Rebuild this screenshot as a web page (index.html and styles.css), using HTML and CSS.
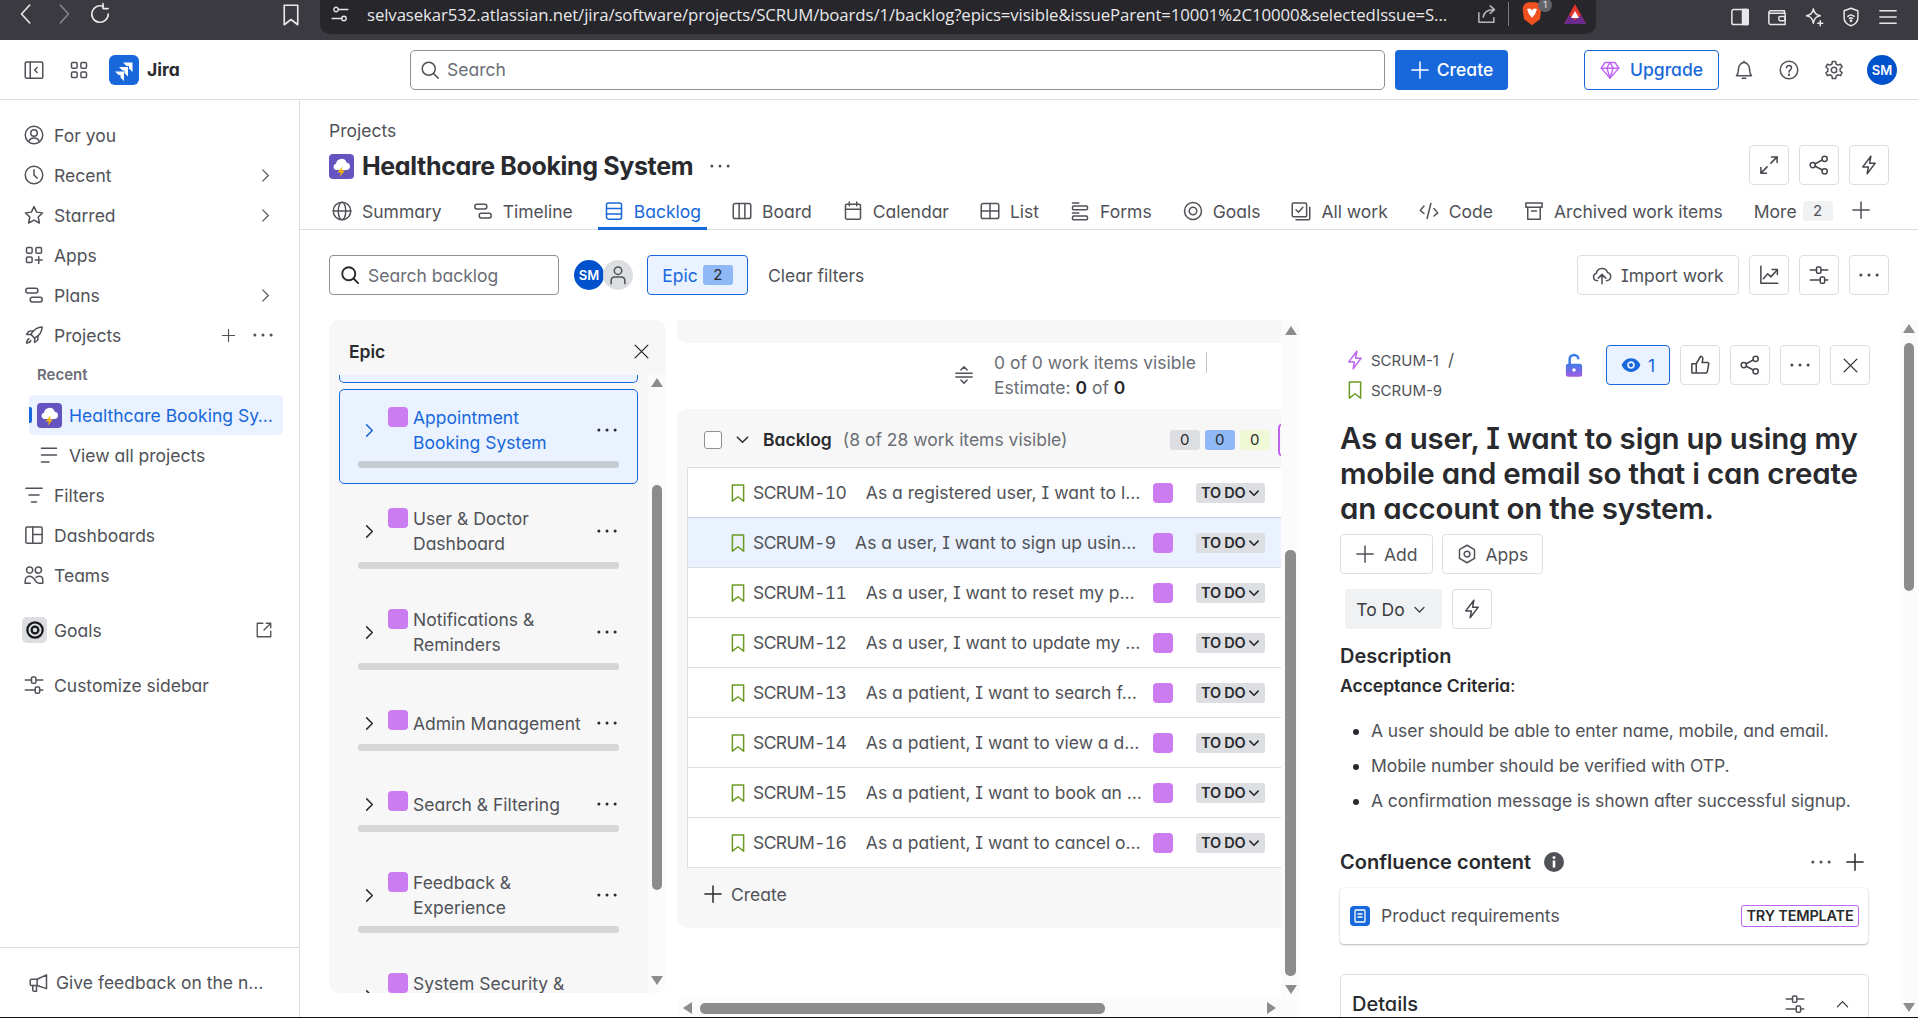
FILE: index.html
```html
<!DOCTYPE html>
<html lang="en">
<head>
  <meta charset="UTF-8">
  <title>Backlog - Healthcare Booking System - Jira</title>
  <link rel="stylesheet" href="styles.css">
</head>
<body>
  <!-- icon set -->
  <svg class="defs" xmlns="http://www.w3.org/2000/svg">
    <defs>
      <linearGradient id="lockGrad" x1="0" y1="0" x2="0" y2="1">
        <stop offset="0" stop-color="#3d7be8"/>
        <stop offset="1" stop-color="#a35ce0"/>
      </linearGradient>
    </defs>
    <symbol id="back" viewBox="0 0 16 16"><path d="M10.500 2 5 8l5.500 6"/></symbol>
    <symbol id="forward" viewBox="0 0 16 16"><path d="M5.500 2 11 8l-5.500 6"/></symbol>
    <symbol id="reload" viewBox="0 0 16 16"><path d="M13.500 8A5.500 5.500 0 1 1 10 2.900"/><path d="M10 1v3.400h3.400" /></symbol>
    <symbol id="bookmark" viewBox="0 0 16 16"><path d="M3.500 1.500h9v13L8 11l-4.500 3.500z"/></symbol>
    <symbol id="tune" viewBox="0 0 16 16"><circle cx="4.500" cy="4" r="2"/><path d="M6.500 4H15"/><circle cx="11.500" cy="12" r="2"/><path d="M1 12h8.500"/></symbol>
    <symbol id="sharepage" viewBox="0 0 16 16"><path d="M1.500 7v7.500h12V11"/><path d="M5 10.500c.5-4 3-6 8-6"/><path d="M10.500 1.500 14 4.500l-3.500 3"/></symbol>
    <symbol id="panel" viewBox="0 0 16 16"><rect x="1.500" y="2" width="13" height="12" rx="1.500"/><rect x="10" y="2" width="4.500" height="12" fill="currentColor"/></symbol>
    <symbol id="wallet" viewBox="0 0 16 16"><path d="M14 5V3H3a1.500 1.500 0 0 0-1.500 1.500v8A1.500 1.500 0 0 0 3 14h11.500V5H2"/><rect x="9.500" y="7.500" width="5" height="3.500" rx="1"/></symbol>
    <symbol id="sparkle" viewBox="0 0 16 16"><path d="M7.500 1.500c.6 3.600 2 5 5.500 5.500-3.500.6-4.900 2-5.500 6C6.900 9 5.500 7.600 2 7c3.500-.5 4.900-1.900 5.500-5.500z"/><path d="M13 11v4M11 13h4"/></symbol>
    <symbol id="shield" viewBox="0 0 16 16"><path d="M8 1 2.500 3v5.500C2.500 12 5 14 8 15c3-1 5.500-3 5.500-6.500V3z"/><path d="M5.500 7.500c1.500-1.300 3.500-1.300 5 0M6.700 9.200c.8-.6 1.800-.6 2.600 0"/><circle cx="8" cy="11" r=".5"/></symbol>
    <symbol id="menu" viewBox="0 0 16 16"><path d="M1.500 3h13M1.500 8h13M1.500 13h13"/></symbol>
    <symbol id="collapse" viewBox="0 0 16 16"><rect x="1" y="1.500" width="14" height="13" rx="1"/><path d="M5 1.500v13M10.500 6 8.500 8l2 2"/></symbol>
    <symbol id="grid" viewBox="0 0 16 16"><rect x="2" y="2" width="4.500" height="4.500" rx="1"/><rect x="9.500" y="2" width="4.500" height="4.500" rx="1"/><rect x="2" y="9.500" width="4.500" height="4.500" rx="1"/><rect x="9.500" y="9.500" width="4.500" height="4.500" rx="1"/></symbol>
    <symbol id="search" viewBox="0 0 16 16"><circle cx="7" cy="7" r="5.200"/><path d="m11 11 3.500 3.500"/></symbol>
    <symbol id="plus" viewBox="0 0 16 16"><path d="M8 1.500v13M1.500 8h13"/></symbol>
    <symbol id="bell" viewBox="0 0 16 16"><path d="M2 12.500c1.200-1 1.500-2 1.500-4.500C3.500 4.500 5.500 2 8 2s4.500 2.500 4.500 6c0 2.500.3 3.500 1.500 4.500z"/><path d="M6.500 14.500h3M8 1v1"/></symbol>
    <symbol id="help" viewBox="0 0 16 16"><circle cx="8" cy="8" r="7"/><path d="M6 6.200C6 5 6.900 4.300 8 4.300s2 .8 2 1.900c0 1.700-2 1.600-2 3.300"/><circle cx="8" cy="11.700" r=".4"/></symbol>
    <symbol id="gear" viewBox="0 0 16 16"><path d="M6.700 1.200h2.600l.4 2 1.500.9 2-.7 1.300 2.200-1.600 1.400v1.900l1.600 1.300-1.300 2.300-2-.7-1.500.9-.4 2.100H6.700l-.4-2.100-1.500-.9-2 .7-1.300-2.300 1.600-1.300V7l-1.600-1.400 1.300-2.200 2 .7 1.500-.9z"/><circle cx="8" cy="8" r="2.200"/></symbol>
    <symbol id="foryou" viewBox="0 0 16 16"><circle cx="8" cy="8" r="7"/><circle cx="8" cy="6.300" r="2.600"/><path d="M3.800 13.200c.6-2 2.200-2.900 4.200-2.900s3.600.9 4.200 2.900"/></symbol>
    <symbol id="clock" viewBox="0 0 16 16"><circle cx="8" cy="8" r="7"/><path d="M8 3.800V8l2.600 2.600"/></symbol>
    <symbol id="star" viewBox="0 0 16 16"><path d="m8 1.300 2.100 4.400 4.700.6-3.400 3.300.9 4.800L8 12.100l-4.300 2.300.9-4.800-3.400-3.300 4.700-.6z"/></symbol>
    <symbol id="apps" viewBox="0 0 16 16"><rect x="2" y="2" width="4.500" height="4.500" rx="1"/><rect x="9.500" y="2" width="4.500" height="4.500" rx="1"/><rect x="2" y="9.500" width="4.500" height="4.500" rx="1"/><path d="M11.800 9.300v5.400M9 12h5.500"/></symbol>
    <symbol id="plans" viewBox="0 0 16 16"><rect x="1.500" y="2.500" width="9.500" height="3.800" rx="1.500"/><rect x="5" y="9.700" width="9.500" height="3.800" rx="1.500"/></symbol>
    <symbol id="rocket" viewBox="0 0 16 16"><path d="M14.500 1.500c-4 0-6.500 1.700-9 6l3 3c4.300-2.500 6-5 6-9z"/><path d="M5.500 7.500H2L4 5l3-.3M8.500 10.500V14l2.500-2 .3-3"/><path d="M4 11c-1.200.5-1.800 1.600-2 3.500 1.900-.2 3-.8 3.500-2"/></symbol>
    <symbol id="dots" viewBox="0 0 16 16"><circle cx="1.500" cy="8" r="1.200" class="solid"/><circle cx="8" cy="8" r="1.200" class="solid"/><circle cx="14.500" cy="8" r="1.200" class="solid"/></symbol>
    <symbol id="right" viewBox="0 0 16 16"><path d="m5 2 6 6-6 6"/></symbol>
    <symbol id="down" viewBox="0 0 16 16"><path d="M2.500 5.500 8 11l5.500-5.500"/></symbol>
    <symbol id="up" viewBox="0 0 16 16"><path d="M2.500 10.500 8 5l5.500 5.500"/></symbol>
    <symbol id="close" viewBox="0 0 16 16"><path d="m2 2 12 12M14 2 2 14"/></symbol>
    <symbol id="lines" viewBox="0 0 16 16"><path d="M2 2.500h12M2 8h12M2 13.500h6"/></symbol>
    <symbol id="filter" viewBox="0 0 16 16"><path d="M1.500 2.500h13M4 8h8M6 13.500h4"/></symbol>
    <symbol id="dash" viewBox="0 0 16 16"><rect x="1.500" y="1.500" width="13" height="13" rx="1"/><path d="M7 1.500v13M7 7.500h7.500"/></symbol>
    <symbol id="teams" viewBox="0 0 16 16"><circle cx="4.500" cy="4" r="2.500"/><circle cx="11.500" cy="4" r="2.500"/><path d="M1 14.500v-2c0-2 1.500-3.500 3.500-3.500 2.500 0 3.500 2 4.500 3.500.5 1 1.200 2 3 2h3v-3c0-1.500-1.200-2.500-3-2.500-1 0-1.800.5-2.500 1"/><path d="M1 14.500h4"/></symbol>
    <symbol id="target" viewBox="0 0 16 16"><circle cx="8" cy="8" r="6.800"/><circle cx="8" cy="8" r="3"/></symbol>
    <symbol id="external" viewBox="0 0 16 16"><path d="M7 2H2v12h12V9"/><path d="M8 8l6-6M10 2h4v4"/></symbol>
    <symbol id="sliders" viewBox="0 0 16 16"><path d="M1 4h5M10 4h5M1 12h8M13 12h2"/><rect x="6" y="1.500" width="3.500" height="5" rx="1"/><rect x="9" y="9.500" width="3.500" height="5" rx="1"/></symbol>
    <symbol id="megaphone" viewBox="0 0 16 16"><path d="M14 1.500v11L6.500 10H2a1 1 0 0 1-1-1V6a1 1 0 0 1 1-1h4.500z"/><path d="M6.500 5v5M3 10v3.500c0 .6.400 1 1 1h2V10"/></symbol>
    <symbol id="globe" viewBox="0 0 16 16"><circle cx="8" cy="8" r="7"/><ellipse cx="8" cy="8" rx="3" ry="7"/><path d="M1 8h14"/></symbol>
    <symbol id="backlog" viewBox="0 0 16 16"><rect x="2" y="1.500" width="12" height="13" rx="1.500"/><path d="M2 6h12M2 10.300h12"/></symbol>
    <symbol id="board" viewBox="0 0 16 16"><rect x="1" y="2" width="14" height="12" rx="1.500"/><path d="M5.700 2v12M10.300 2v12"/></symbol>
    <symbol id="calendar" viewBox="0 0 16 16"><rect x="2" y="2.500" width="12" height="12" rx="1"/><path d="M2 6.500h12M5 .8v3M11 .8v3"/></symbol>
    <symbol id="table" viewBox="0 0 16 16"><rect x="1" y="2" width="14" height="12" rx="1.500"/><path d="M8 2v12M1 8h14"/></symbol>
    <symbol id="forms" viewBox="0 0 16 16"><path d="M2 1.500h5"/><rect x="2" y="4" width="12" height="3" rx="1"/><path d="M2 9.500h5"/><rect x="2" y="12" width="12" height="3" rx="1"/></symbol>
    <symbol id="allwork" viewBox="0 0 16 16"><rect x="1" y="1.500" width="11.500" height="11" rx="1"/><path d="m4 7 2 2 3.500-4"/><path d="M15 5v9a1 1 0 0 1-1 1H4"/></symbol>
    <symbol id="code" viewBox="0 0 16 16"><path d="M4 4 1 7.500 4 10M12 6l3 3.500-3 2.500M9.500 2 6.500 14"/></symbol>
    <symbol id="archive" viewBox="0 0 16 16"><rect x="1.500" y="1.500" width="13" height="3.500"/><path d="M3 5v9.500h10V5M6 8h4"/></symbol>
    <symbol id="expand" viewBox="0 0 16 16"><path d="m9.500 6.500 5-5M10 1.500h4.500V6M6.500 9.500l-5 5M1.500 10v4.500H6"/></symbol>
    <symbol id="share" viewBox="0 0 16 16"><circle cx="3" cy="8" r="2.100"/><circle cx="12.500" cy="3" r="2.100"/><circle cx="12.500" cy="13" r="2.100"/><path d="m5 7 5.600-3M5 9l5.600 3"/></symbol>
    <symbol id="bolt" viewBox="0 0 16 16"><path d="M9.500 1 3 9.500h4.500L6.500 15 13 6.500H8.500z"/></symbol>
    <symbol id="upload" viewBox="0 0 16 16"><path d="M4.500 12.500H4A3 3 0 0 1 3.500 6.600 4.600 4.600 0 0 1 12.400 6a3.300 3.300 0 0 1-.4 6.500h-.5"/><path d="M8 15V7.500M5 10.500l3-3 3 3"/></symbol>
    <symbol id="chart" viewBox="0 0 16 16"><path d="M1.500 1v13.500H15"/><path d="m3.500 11 3.500-4 2.500 2.500L14.500 4"/><path d="M10.500 3.500h4.200v4"/></symbol>
    <symbol id="collapserow" viewBox="0 0 16 16"><path d="M5.500 4 8 1.500 10.500 4M5.500 12 8 14.500 10.500 12M1.500 6.500h13M1.500 9.500h13"/></symbol>
    <symbol id="eye" viewBox="0 0 16 16"><path class="solid" d="M8 2.500c3.800 0 6.500 2.800 7.500 5.500-1 2.700-3.700 5.500-7.500 5.500S1.500 10.700.5 8c1-2.700 3.700-5.500 7.500-5.500z"/><circle cx="8" cy="8" r="3" fill="#e9f2fe" stroke="none"/><circle cx="8" cy="8" r="1.700" class="solid"/></symbol>
    <symbol id="thumb" viewBox="0 0 16 16"><path d="M5 7 8.500 1c1.500.3 2 1.300 1.700 2.600L9.700 6H14a1 1 0 0 1 1 1.200l-1.200 6.300a1 1 0 0 1-1 .9H5zM5 7H1.500v7.400H5"/></symbol>
    <symbol id="hex" viewBox="0 0 16 16"><path d="M8 1 14 4.500v7L8 15l-6-3.500v-7z"/><circle cx="8" cy="8" r="2.300"/></symbol>
    <symbol id="diamond" viewBox="0 0 16 16"><path d="M4 2h8l3 4.500L8 14.500 1 6.500z"/><path d="M1 6.500h14M5.500 6.500 8 14.500l2.500-8L8 2z"/></symbol>
    <symbol id="person" viewBox="0 0 16 16"><circle cx="8" cy="4.500" r="3"/><path d="M2.500 15v-2.500c0-2 1.500-3 3-3h5c1.500 0 3 1 3 3V15"/></symbol>
    <symbol id="projicon" viewBox="0 0 25 25">
      <rect width="25" height="25" rx="4" fill="#6554c0"/>
      <path d="M7.500 16a3.200 3.200 0 0 1-.5-6.300 5.500 5.500 0 0 1 10.700-1A3.700 3.700 0 0 1 18 16z" fill="#fff"/>
      <path d="M13.500 12.500 8.500 18.500H12l-1.500 4.500 5.500-6.500h-3.200z" fill="#f7b500"/>
    </symbol>
  </svg>

  <div class="page">
    <!-- browser chrome -->
    <header class="chrome">
      <svg class="ic ch-back"><use href="#back"/></svg>
      <svg class="ic ch-fwd"><use href="#forward"/></svg>
      <svg class="ic ch-reload"><use href="#reload"/></svg>
      <svg class="ic ch-mark"><use href="#bookmark"/></svg>
      <div class="urlbar">
        <svg class="ic ic-sm"><use href="#tune"/></svg>
        <span class="url">selvasekar532.atlassian.net/jira/software/projects/SCRUM/boards/1/backlog?epics=visible&amp;issueParent=10001%2C10000&amp;selectedIssue=S...</span>
        <svg class="ic url-share"><use href="#sharepage"/></svg>
        <i class="url-sep"></i>
        <span class="brave">
          <svg viewBox="0 0 16 20" width="20" height="26"><path d="M2 2 5 .5h6L14 2l1.500 3-1 9L8 19l-6.500-5-1-9z" fill="#f1501f"/><path d="M4 6l2.500-.5L8 7l1.500-1.500L12 6l-1.500 4L8 13 5.500 10z" fill="#fff"/></svg>
          <b>1</b>
        </span>
        <svg class="rewards" viewBox="0 0 24 22" width="24" height="22"><path d="M12 1 23 21H1z" fill="#e5352c"/><path d="M1 21l5-9 6 5 6-5 5 9z" fill="#6b2a8e"/><path d="M12 8l4 7H8z" fill="#fff"/></svg>
      </div>
      <div class="ch-tools">
        <svg class="ic"><use href="#panel"/></svg>
        <svg class="ic"><use href="#wallet"/></svg>
        <svg class="ic"><use href="#sparkle"/></svg>
        <svg class="ic"><use href="#shield"/></svg>
        <svg class="ic"><use href="#menu"/></svg>
      </div>
    </header>

    <!-- jira top nav -->
    <nav class="topnav">
      <div class="nav-left">
        <svg class="ic"><use href="#collapse"/></svg>
        <svg class="ic"><use href="#grid"/></svg>
        <span class="logo-wrap">
          <svg class="logo" viewBox="0 0 30 30" width="30" height="30">
            <rect width="30" height="30" rx="6" fill="#1868db"/>
            <path d="M14 7.500h9.500V17l-3.500-3.500V11h-2.500z" fill="#fff"/>
            <path d="M10 12h9v9.500l-3.500-3.500v-2.500h-2z" fill="#fff"/>
            <path d="M6 16.500h9V26l-3.500-3.500V20H9.500z" fill="#fff"/>
          </svg>
          <span class="logo-text">Jira</span>
        </span>
      </div>
      <div class="nav-search">
        <svg class="ic"><use href="#search"/></svg>
        <span>Search</span>
      </div>
      <button class="create"><svg class="ic"><use href="#plus"/></svg>Create</button>
      <button class="upgrade"><svg class="ic diamond"><use href="#diamond"/></svg>Upgrade</button>
      <svg class="ic"><use href="#bell"/></svg>
      <svg class="ic"><use href="#help"/></svg>
      <svg class="ic"><use href="#gear"/></svg>
      <span class="avatar nav-avatar">SM</span>
    </nav>

    <div class="main">
      <!-- left sidebar -->
      <aside class="sidebar">
        <div class="side-items">
          <a class="side-item"><svg class="ic"><use href="#foryou"/></svg>For you</a>
          <a class="side-item"><svg class="ic"><use href="#clock"/></svg>Recent<svg class="ic ic-xs end"><use href="#right"/></svg></a>
          <a class="side-item"><svg class="ic"><use href="#star"/></svg>Starred<svg class="ic ic-xs end"><use href="#right"/></svg></a>
          <a class="side-item"><svg class="ic"><use href="#apps"/></svg>Apps</a>
          <a class="side-item"><svg class="ic"><use href="#plans"/></svg>Plans<svg class="ic ic-xs end"><use href="#right"/></svg></a>
          <a class="side-item"><svg class="ic"><use href="#rocket"/></svg>Projects<svg class="ic ic-xs end plus-end"><use href="#plus"/></svg><svg class="ic"><use href="#dots"/></svg></a>
          <div class="side-label">Recent</div>
          <a class="side-project">
            <i class="side-marker"></i>
            <svg class="proj-icon" width="25" height="25"><use href="#projicon"/></svg>
            Healthcare Booking Sy…
          </a>
          <a class="side-sub"><svg class="ic"><use href="#lines"/></svg>View all projects</a>
          <a class="side-item"><svg class="ic"><use href="#filter"/></svg>Filters</a>
          <a class="side-item"><svg class="ic"><use href="#dash"/></svg>Dashboards</a>
          <a class="side-item"><svg class="ic"><use href="#teams"/></svg>Teams</a>
          <a class="side-item side-gap"><span class="goal-box"><svg class="ic ic-sm"><use href="#target"/></svg></span>Goals<svg class="ic ic-sm end"><use href="#external"/></svg></a>
          <a class="side-item side-gap"><svg class="ic"><use href="#sliders"/></svg>Customize sidebar</a>
        </div>
        <div class="side-foot"><svg class="ic"><use href="#megaphone"/></svg>Give feedback on the n…</div>
      </aside>

      <section class="content">
        <div class="head">
          <div>
            <div class="crumb">Projects</div>
            <div class="title-row">
              <svg class="proj-icon" width="25" height="25"><use href="#projicon"/></svg>
              <h1>Healthcare Booking System</h1>
              <svg class="ic"><use href="#dots"/></svg>
            </div>
          </div>
          <div class="head-btns">
            <button class="btn-sq"><svg class="ic"><use href="#expand"/></svg></button>
            <button class="btn-sq"><svg class="ic"><use href="#share"/></svg></button>
            <button class="btn-sq"><svg class="ic"><use href="#bolt"/></svg></button>
          </div>
        </div>

        <div class="tabs">
          <a class="tab"><svg class="ic"><use href="#globe"/></svg>Summary</a>
          <a class="tab"><svg class="ic"><use href="#plans"/></svg>Timeline</a>
          <a class="tab active"><svg class="ic"><use href="#backlog"/></svg>Backlog</a>
          <a class="tab"><svg class="ic"><use href="#board"/></svg>Board</a>
          <a class="tab"><svg class="ic"><use href="#calendar"/></svg>Calendar</a>
          <a class="tab"><svg class="ic"><use href="#table"/></svg>List</a>
          <a class="tab"><svg class="ic"><use href="#forms"/></svg>Forms</a>
          <a class="tab"><svg class="ic"><use href="#target"/></svg>Goals</a>
          <a class="tab"><svg class="ic"><use href="#allwork"/></svg>All work</a>
          <a class="tab"><svg class="ic"><use href="#code"/></svg>Code</a>
          <a class="tab"><svg class="ic"><use href="#archive"/></svg>Archived work items</a>
          <a class="tab">More<span class="count">2</span></a>
          <svg class="ic tab-plus"><use href="#plus"/></svg>
        </div>

        <div class="toolbar">
          <div class="backlog-search"><svg class="ic"><use href="#search"/></svg><span>Search backlog</span></div>
          <div class="people">
            <span class="avatar">SM</span>
            <span class="avatar person"><svg class="ic"><use href="#person"/></svg></span>
          </div>
          <button class="epic-filter">Epic<span class="epic-count">2</span></button>
          <span class="clear">Clear filters</span>
          <button class="btn import"><svg class="ic"><use href="#upload"/></svg>Import work</button>
          <button class="btn-sq"><svg class="ic"><use href="#chart"/></svg></button>
          <button class="btn-sq"><svg class="ic"><use href="#sliders"/></svg></button>
          <button class="btn-sq"><svg class="ic"><use href="#dots"/></svg></button>
        </div>

        <div class="panels">
          <!-- epic panel -->
          <div class="epics">
            <div class="epics-head"><strong>Epic</strong><svg class="ic ic-x"><use href="#close"/></svg></div>
            <div class="epics-body">
              <div class="epic-list">
                <div class="epic-stub"></div>
                <div class="epic selected">
                  <div class="epic-row">
                    <svg class="ic ic-xs"><use href="#right"/></svg>
                    <i class="sq"></i>
                    <span class="epic-name">Appointment Booking System</span>
                    <svg class="ic end"><use href="#dots"/></svg>
                  </div>
                  <div class="bar"></div>
                </div>
                <div class="epic">
                  <div class="epic-row">
                    <svg class="ic ic-xs"><use href="#right"/></svg>
                    <i class="sq"></i>
                    <span class="epic-name">User &amp; Doctor Dashboard</span>
                    <svg class="ic end"><use href="#dots"/></svg>
                  </div>
                  <div class="bar"></div>
                </div>
                <div class="epic">
                  <div class="epic-row">
                    <svg class="ic ic-xs"><use href="#right"/></svg>
                    <i class="sq"></i>
                    <span class="epic-name">Notifications &amp; Reminders</span>
                    <svg class="ic end"><use href="#dots"/></svg>
                  </div>
                  <div class="bar"></div>
                </div>
                <div class="epic">
                  <div class="epic-row">
                    <svg class="ic ic-xs"><use href="#right"/></svg>
                    <i class="sq"></i>
                    <span class="epic-name wide">Admin Management</span>
                    <svg class="ic end"><use href="#dots"/></svg>
                  </div>
                  <div class="bar"></div>
                </div>
                <div class="epic">
                  <div class="epic-row">
                    <svg class="ic ic-xs"><use href="#right"/></svg>
                    <i class="sq"></i>
                    <span class="epic-name wide">Search &amp; Filtering</span>
                    <svg class="ic end"><use href="#dots"/></svg>
                  </div>
                  <div class="bar"></div>
                </div>
                <div class="epic">
                  <div class="epic-row">
                    <svg class="ic ic-xs"><use href="#right"/></svg>
                    <i class="sq"></i>
                    <span class="epic-name">Feedback &amp; Experience</span>
                    <svg class="ic end"><use href="#dots"/></svg>
                  </div>
                  <div class="bar"></div>
                </div>
                <div class="epic">
                  <div class="epic-row">
                    <svg class="ic ic-xs"><use href="#right"/></svg>
                    <i class="sq"></i>
                    <span class="epic-name">System Security &amp; Access</span>
                    <svg class="ic end"><use href="#dots"/></svg>
                  </div>
                  <div class="bar"></div>
                </div>
              </div>
              <div class="vbar vbar-epics">
                <i class="arrow-up"></i>
                <i class="thumb"></i>
                <i class="arrow-down"></i>
              </div>
            </div>
          </div>

          <!-- backlog -->
          <div class="backlog-col">
            <div class="backlog-scroll">
              <div class="backlog-area">
                <div class="sprint-end"></div>
                <div class="sprint-sum">
                  <svg class="ic"><use href="#collapserow"/></svg>
                  <div class="sum-text">
                    <div><span class="sum-first">0 of 0 work items visible</span></div>
                    <div>Estimate: <b>0</b> of <b>0</b></div>
                  </div>
                </div>
                <div class="backlog">
                  <div class="backlog-head">
                    <i class="checkbox"></i>
                    <svg class="ic ic-xs"><use href="#down"/></svg>
                    <strong>Backlog</strong>
                    <span class="visible">(8 of 28 work items visible)</span>
                    <span class="est grey">0</span>
                    <span class="est blue">0</span>
                    <span class="est green">0</span>
                    <span class="est-more"></span>
                  </div>
                  <div class="rows">
                    <div class="row"><svg class="ic story"><use href="#bookmark"/></svg><span class="key">SCRUM-10</span><span class="sum">As a registered user, I want to l…</span><i class="sq"></i><span class="loz">TO DO<svg class="ic"><use href="#down"/></svg></span></div>
                    <div class="row current"><svg class="ic story"><use href="#bookmark"/></svg><span class="key">SCRUM-9</span><span class="sum">As a user, I want to sign up usin…</span><i class="sq"></i><span class="loz">TO DO<svg class="ic"><use href="#down"/></svg></span></div>
                    <div class="row"><svg class="ic story"><use href="#bookmark"/></svg><span class="key">SCRUM-11</span><span class="sum">As a user, I want to reset my p…</span><i class="sq"></i><span class="loz">TO DO<svg class="ic"><use href="#down"/></svg></span></div>
                    <div class="row"><svg class="ic story"><use href="#bookmark"/></svg><span class="key">SCRUM-12</span><span class="sum">As a user, I want to update my …</span><i class="sq"></i><span class="loz">TO DO<svg class="ic"><use href="#down"/></svg></span></div>
                    <div class="row"><svg class="ic story"><use href="#bookmark"/></svg><span class="key">SCRUM-13</span><span class="sum">As a patient, I want to search f…</span><i class="sq"></i><span class="loz">TO DO<svg class="ic"><use href="#down"/></svg></span></div>
                    <div class="row"><svg class="ic story"><use href="#bookmark"/></svg><span class="key">SCRUM-14</span><span class="sum">As a patient, I want to view a d…</span><i class="sq"></i><span class="loz">TO DO<svg class="ic"><use href="#down"/></svg></span></div>
                    <div class="row"><svg class="ic story"><use href="#bookmark"/></svg><span class="key">SCRUM-15</span><span class="sum">As a patient, I want to book an …</span><i class="sq"></i><span class="loz">TO DO<svg class="ic"><use href="#down"/></svg></span></div>
                    <div class="row"><svg class="ic story"><use href="#bookmark"/></svg><span class="key">SCRUM-16</span><span class="sum">As a patient, I want to cancel o…</span><i class="sq"></i><span class="loz">TO DO<svg class="ic"><use href="#down"/></svg></span></div>
                  </div>
                  <div class="backlog-create"><svg class="ic"><use href="#plus"/></svg>Create</div>
                </div>
              </div>
              <div class="vbar vbar-backlog">
                <i class="arrow-up"></i>
                <i class="thumb"></i>
                <i class="arrow-down"></i>
              </div>
            </div>
            <div class="hbar">
              <i class="arrow-left"></i>
              <i class="hthumb"></i>
              <i class="arrow-right"></i>
            </div>
          </div>

          <!-- issue detail -->
          <div class="detail">
            <div class="detail-main">
              <div class="detail-top">
                <div class="trail">
                  <div class="trail-line"><svg class="ic epic-bolt"><use href="#bolt"/></svg>SCRUM-1<span class="slash">/</span></div>
                  <div class="trail-line"><svg class="ic story"><use href="#bookmark"/></svg>SCRUM-9</div>
                </div>
                <svg class="lock" viewBox="0 0 16 20" width="20" height="25"><path d="M4.500 9V5a3.500 3.500 0 0 1 7 0" fill="none" stroke="#3d7be8" stroke-width="2"/><rect x="1.500" y="8.500" width="13" height="10.500" rx="2" fill="url(#lockGrad)"/><circle cx="8" cy="13.500" r="1.400" fill="#fff"/></svg>
                <button class="watch"><svg class="ic eye"><use href="#eye"/></svg>1</button>
                <button class="btn-sq"><svg class="ic"><use href="#thumb"/></svg></button>
                <button class="btn-sq"><svg class="ic"><use href="#share"/></svg></button>
                <button class="btn-sq"><svg class="ic"><use href="#dots"/></svg></button>
                <button class="btn-sq"><svg class="ic ic-x"><use href="#close"/></svg></button>
              </div>
              <h2>As a user, I want to sign up using my mobile and email so that i can create an account on the system.</h2>
              <div class="actions">
                <button class="btn"><svg class="ic"><use href="#plus"/></svg>Add</button>
                <button class="btn"><svg class="ic"><use href="#hex"/></svg>Apps</button>
              </div>
              <div class="status-row">
                <button class="status">To Do<svg class="ic ic-xs"><use href="#down"/></svg></button>
                <button class="btn-sq"><svg class="ic"><use href="#bolt"/></svg></button>
              </div>
              <h3>Description</h3>
              <p class="ac"><b>Acceptance Criteria</b>:</p>
              <ul>
                <li>A user should be able to enter name, mobile, and email.</li>
                <li>Mobile number should be verified with OTP.</li>
                <li>A confirmation message is shown after successful signup.</li>
              </ul>
              <div class="conf-head">
                <h3>Confluence content</h3>
                <svg class="info" viewBox="0 0 20 20" width="20" height="20"><circle cx="10" cy="10" r="10" fill="#505258"/><rect x="8.700" y="8.500" width="2.600" height="7" fill="#fff"/><circle cx="10" cy="5.500" r="1.500" fill="#fff"/></svg>
                <svg class="ic end"><use href="#dots"/></svg>
                <svg class="ic conf-plus"><use href="#plus"/></svg>
              </div>
              <div class="conf-card">
                <svg viewBox="0 0 20 20" width="20" height="20"><rect width="20" height="20" rx="4" fill="#1868db"/><rect x="5" y="4" width="10" height="12" rx="1" fill="none" stroke="#fff" stroke-width="1.300"/><path d="M7.500 8h5M7.500 11h5" stroke="#fff" stroke-width="1.300"/></svg>
                <span>Product requirements</span>
                <span class="try">TRY TEMPLATE</span>
              </div>
              <div class="details-box">
                <span>Details</span>
                <svg class="ic end"><use href="#sliders"/></svg>
                <svg class="ic ic-xs details-up"><use href="#up"/></svg>
              </div>
            </div>
            <div class="vbar vbar-detail">
              <i class="arrow-up"></i>
              <i class="thumb"></i>
              <i class="arrow-down"></i>
            </div>
          </div>
        </div>
      </section>
    </div>
  </div>
</body>
</html>
```
FILE: styles.css
```css
* { box-sizing: border-box; }

html, body {
  margin: 0;
  height: 100%;
  overflow: hidden;
}

body {
  font-family: Inter, 'Noto Sans', Arial, sans-serif;
  font-feature-settings: "cv11", "cv08";
  font-size: 17.5px;
  color: #505258;
  background: #fff;
}

button {
  font: inherit;
  color: inherit;
  background: #fff;
  cursor: pointer;
  padding: 0;
}

h1, h2, h3, p, ul { margin: 0; }

.defs { position: absolute; width: 0; height: 0; }

.ic {
  width: 20px;
  height: 20px;
  flex: none;
  fill: none;
  stroke: currentColor;
  stroke-width: 1.2;
  stroke-linecap: round;
  stroke-linejoin: round;
}
.ic-sm { width: 18px; height: 18px; }
.ic-xs { width: 15px; height: 15px; }
.ic-x { width: 17px; height: 17px; color: #292a2e; }
.solid { fill: currentColor; stroke: none; }
.end { margin-left: auto; }

.page {
  height: 1018px;
  display: flex;
  flex-direction: column;
  border-bottom: 1px solid #111;
}

/* browser chrome */
.chrome {
  flex: none;
  height: 40px;
  background: #3a3a40;
  color: #e8e8ea;
  display: flex;
  padding-left: 14px;
}
.chrome > .ic { margin-top: 2px; stroke-width: 1.1; width: 24px; height: 24px; }
.ch-fwd { margin-left: 14px; color: #85858a; }
.ch-reload { margin-left: 12px; }
.chrome > .ch-mark { margin-left: 167px; margin-top: 3px; }

.urlbar {
  width: 1276px;
  height: 34px;
  margin-left: 17px;
  background: #26262b;
  border-radius: 0 0 10px 10px;
  display: flex;
  align-items: center;
  padding: 0 0 6px 11px;
}
.url {
  margin-left: 18px;
  font-family: 'Open Sans', 'Noto Sans', sans-serif;
  font-feature-settings: normal;
  font-size: 16.8px;
  letter-spacing: -0.1px;
  white-space: nowrap;
  flex: none;
  width: 1092px;
  overflow: hidden;
}
.url-share { margin-left: 18px; color: #b8b8bc; width: 20px; }
.url-sep { width: 1px; height: 24px; background: #77777c; margin-left: 11px; }
.brave { margin-left: 13px; position: relative; display: flex; }
.brave b {
  position: absolute;
  top: -3px;
  right: -10px;
  width: 14px;
  height: 14px;
  line-height: 14px;
  text-align: center;
  border-radius: 50%;
  background: #63636a;
  font-size: 9px;
  font-weight: 400;
}
.rewards { margin-left: 21px; }
.ch-tools {
  margin-left: 134px;
  display: flex;
  gap: 17px;
  padding-top: 7px;
}

/* top nav */
.topnav {
  flex: none;
  height: 60px;
  border-bottom: 1px solid #dcdde0;
  display: flex;
  align-items: center;
  gap: 25px;
  padding-right: 21px;
}
.nav-left {
  width: 410px;
  padding-left: 24px;
  display: flex;
  align-items: center;
  gap: 25px;
}
.logo-wrap { display: flex; align-items: center; gap: 8px; margin-left: -5px; }
.logo-text { font-weight: 700; color: #292a2e; }
.nav-search {
  width: 975px;
  height: 40px;
  margin-left: -25px;
  border: 1px solid #8c8f97;
  border-radius: 5px;
  display: flex;
  align-items: center;
  gap: 7px;
  padding-left: 9px;
  color: #6b6e76;
}
.nav-search .ic { color: #505258; }
.create {
  width: 113px;
  height: 40px;
  margin-left: -15px;
  border: 0;
  border-radius: 4px;
  background: #1868db;
  color: #fff;
  font-weight: 500;
  display: flex;
  align-items: center;
  justify-content: center;
  gap: 7px;
}
.upgrade {
  width: 135px;
  height: 40px;
  margin-left: auto;
  margin-right: -10px;
  border: 1px solid #1868db;
  border-radius: 4px;
  color: #1868db;
  font-weight: 500;
  display: flex;
  align-items: center;
  justify-content: center;
  gap: 10px;
}
.diamond { color: #bf63f3; }
.avatar {
  flex: none;
  width: 30px;
  height: 30px;
  border-radius: 50%;
  background: #0052cc;
  color: #fff;
  font-size: 13px;
  font-weight: 600;
  display: flex;
  align-items: center;
  justify-content: center;
}
.nav-avatar { margin-left: -2px; }

.main { flex: 1; display: flex; min-height: 0; }

/* sidebar */
.sidebar {
  flex: none;
  width: 300px;
  border-right: 1px solid #dcdde0;
  display: flex;
  flex-direction: column;
}
.side-items { flex: 1; padding-top: 15px; }
.side-item {
  height: 40px;
  padding: 0 26px 0 24px;
  display: flex;
  align-items: center;
  gap: 10px;
}
.plus-end { margin-right: 7px; }
.side-label {
  height: 40px;
  line-height: 40px;
  padding-left: 37px;
  font-size: 15px;
  font-weight: 600;
  color: #6b6e76;
}
.side-project {
  margin-left: 29px;
  width: 254px;
  height: 40px;
  border-radius: 5px;
  background: #e9f2fe;
  color: #1868db;
  display: flex;
  align-items: center;
  white-space: nowrap;
  gap: 5px;
}
.side-project .proj-icon { margin-right: 2px; }
.side-marker { width: 3px; height: 16px; background: #1868db; border-radius: 0 2px 2px 0; }
.proj-icon { flex: none; }
.side-sub {
  height: 40px;
  padding-left: 39px;
  display: flex;
  align-items: center;
  gap: 10px;
}
.side-gap { margin-top: 15px; }
.goal-box {
  width: 25px;
  height: 26px;
  margin-left: -2px;
  margin-right: -3px;
  border-radius: 5px;
  background: #dddee1;
  color: #16171a;
  display: flex;
  align-items: center;
  justify-content: center;
}
.goal-box .ic { stroke-width: 2; }
.side-foot {
  flex: none;
  height: 70px;
  border-top: 1px solid #dcdde0;
  padding-left: 29px;
  display: flex;
  align-items: center;
  gap: 7px;
  white-space: nowrap;
}

/* content head */
.content {
  flex: 1;
  min-width: 0;
  display: flex;
  flex-direction: column;
}
.head {
  flex: none;
  height: 90px;
  padding: 20px 29px 0;
  display: flex;
  justify-content: space-between;
}
.crumb { height: 22px; line-height: 22px; }
.title-row {
  margin-top: 9px;
  height: 30px;
  display: flex;
  align-items: center;
}
.title-row h1 {
  margin: 0 17px 0 8px;
  font-size: 25px;
  font-weight: 650;
  letter-spacing: -0.35px;
  color: #292a2e;
}
.head-btns { display: flex; gap: 10px; padding-top: 25px; }
.btn-sq {
  flex: none;
  width: 40px;
  height: 40px;
  border: 1px solid #dddee1;
  border-radius: 4px;
  color: #44464c;
  display: flex;
  align-items: center;
  justify-content: center;
}
.btn {
  height: 40px;
  padding: 0 14px;
  border: 1px solid #dddee1;
  border-radius: 4px;
  display: flex;
  align-items: center;
  gap: 9px;
}

/* tabs */
.tabs {
  flex: none;
  height: 40px;
  padding-left: 26px;
  border-bottom: 1px solid #dcdde0;
  display: flex;
  align-items: stretch;
  gap: 19px;
}
.tab {
  padding: 5px 6px 0;
  margin-bottom: -1px;
  display: flex;
  align-items: center;
  gap: 10px;
  white-space: nowrap;
  border-bottom: 3px solid transparent;
}
.tab.active { color: #1868db; border-bottom-color: #1868db; }
.count {
  width: 30px;
  height: 20px;
  margin-left: -4px;
  background: #f0f1f2;
  border-radius: 3px;
  font-size: 15px;
  text-align: center;
  line-height: 20px;
}
.tab-plus { align-self: center; margin: 1px 0 0 -7px; }

/* toolbar */
.toolbar {
  flex: none;
  height: 40px;
  margin: 25px 0;
  padding: 0 29px;
  display: flex;
  align-items: center;
  gap: 10px;
}
.backlog-search {
  width: 230px;
  height: 40px;
  border: 1px solid #8c8f97;
  border-radius: 4px;
  padding-left: 10px;
  display: flex;
  align-items: center;
  gap: 8px;
  color: #6b6e76;
}
.backlog-search .ic { color: #292a2e; stroke-width: 1.5; }
.people { display: flex; margin-left: 5px; }
.person { background: #dddee1; color: #505258; margin-left: -1px; }
.epic-filter {
  width: 101px;
  height: 40px;
  margin-left: 4px;
  border: 1px solid #1868db;
  border-radius: 4px;
  background: #e9f2fe;
  color: #1868db;
  display: flex;
  align-items: center;
  justify-content: center;
  gap: 5px;
}
.epic-count {
  width: 30px;
  height: 20px;
  line-height: 20px;
  border-radius: 3px;
  background: #8fb8f6;
  color: #292a2e;
  font-size: 15px;
}
.clear { margin-left: 10px; }
.import { margin-left: auto; width: 162px; padding-left: 14px; }

/* panels */
.panels { flex: 1; min-height: 0; display: flex; padding-left: 29px; }

.epics {
  flex: none;
  width: 337px;
  height: 673px;
  margin-right: 11px;
  background: #f7f7f7;
  border-radius: 10px;
  display: flex;
  flex-direction: column;
  overflow: hidden;
}
.epics-head {
  flex: none;
  height: 55px;
  padding: 7px 16px 0 20px;
  display: flex;
  align-items: center;
  justify-content: space-between;
  color: #292a2e;
}
.epics-head strong { font-weight: 600; }
.epics-body { flex: 1; min-height: 0; display: flex; }
.epic-list {
  flex: 1;
  min-width: 0;
  padding: 0 10px;
  overflow: hidden;
  display: flex;
  flex-direction: column;
  gap: 6px;
}
.epic-stub {
  flex: none;
  height: 8px;
  border: 1px solid #1868db;
  border-top: 0;
  border-radius: 0 0 5px 5px;
  background: #e9f2fe;
}
.epic {
  flex: none;
  padding: 15px 18px;
  border: 1px solid transparent;
  border-radius: 5px;
}
.epic.selected {
  background: #e9f2fe;
  border-color: #1868db;
  color: #1868db;
}
.epic.selected .bar { background: #c7ccd4; }
.epic-row {
  min-height: 30px;
  display: flex;
  align-items: center;
  line-height: 25px;
}
.epic-row > .ic { color: #292a2e; }
.epic-row > .ic-xs { margin-left: 4px; stroke-width: 1.6; }
.epic.selected .epic-row > .ic-xs { color: #1868db; }
.epic-row > .end { margin-right: 2px; }
.sq {
  flex: none;
  width: 20px;
  height: 20px;
  border-radius: 4px;
  background: #cb7cf0;
}
.epic-row .sq { align-self: flex-start; margin: 2px 5px 0 11px; }
.epic-name { width: 160px; }
.epic-name.wide { width: auto; white-space: nowrap; }
.bar { height: 7px; margin-top: 6px; border-radius: 3px; background: #d6d6d6; }

.vbar {
  flex: none;
  display: flex;
  flex-direction: column;
  align-items: center;
  background: #fbfbfb;
}
.arrow-up, .arrow-down, .arrow-left, .arrow-right { flex: none; width: 0; height: 0; }
.arrow-up { border: 6px solid transparent; border-top: 0; border-bottom: 9px solid #8c8c8c; }
.arrow-down { border: 6px solid transparent; border-bottom: 0; border-top: 9px solid #8c8c8c; margin-top: auto; }
.arrow-left { border: 6px solid transparent; border-left: 0; border-right: 9px solid #8c8c8c; }
.arrow-right { border: 6px solid transparent; border-right: 0; border-left: 9px solid #8c8c8c; margin-left: auto; }
.thumb { flex: none; background: #8c8c8c; border-radius: 5px; }
.vbar-epics { width: 18px; padding: 3px 0 8px; }
.vbar-epics .thumb { width: 10px; height: 405px; margin-top: 98px; }

/* backlog column */
.backlog-col {
  flex: none;
  width: 623px;
  display: flex;
  flex-direction: column;
}
.backlog-scroll { flex: 1; min-height: 0; display: flex; }
.backlog-area { flex: 1; min-width: 0; overflow: hidden; }
.sprint-end { height: 23px; background: #f7f7f7; border-radius: 0 0 0 10px; }
.sprint-sum {
  height: 66px;
  padding: 4px 0 0 277px;
  display: flex;
  align-items: center;
  gap: 20px;
  line-height: 25px;
  color: #6b6e76;
  white-space: nowrap;
}
.sprint-sum .ic { color: #505258; margin-top: -7px; }
.sum-text { margin-top: -7px; }
.sum-text b { color: #292a2e; font-weight: 600; }
.sum-first { padding-right: 10px; border-right: 1px solid #c4c6cb; }
.backlog {
  width: 640px;
  height: 519px;
  background: #f7f7f7;
  border-radius: 10px 0 0 10px;
}
.backlog-head {
  height: 58px;
  padding: 3px 0 0 27px;
  display: flex;
  align-items: center;
  white-space: nowrap;
}
.backlog-head .ic { color: #292a2e; stroke-width: 1.6; }
.checkbox {
  width: 18px;
  height: 18px;
  margin-right: 13px;
  border: 1px solid #8c8f97;
  border-radius: 3px;
  background: #fff;
}
.backlog-head strong { margin: 0 11px 0 13px; color: #292a2e; font-weight: 600; }
.visible { width: 327px; color: #6b6e76; }
.est {
  width: 30px;
  height: 20px;
  margin-right: 5px;
  line-height: 20px;
  border-radius: 3px;
  text-align: center;
  font-size: 15px;
  color: #292a2e;
}
.est.grey { background: #dddee1; }
.est.blue { background: #8fb8f6; }
.est.green { background: #eff9d6; }
.est-more {
  width: 30px;
  height: 34px;
  margin-left: 3px;
  border: 2px solid #bf63f3;
  border-radius: 5px;
}
.rows {
  width: 594px;
  margin-left: 10px;
  background: #fff;
  border-left: 1px solid #dddee1;
  border-bottom: 1px solid #dddee1;
}
.row {
  height: 50px;
  padding: 0 16px 0 40px;
  border-top: 1px solid #dddee1;
  display: flex;
  align-items: center;
  white-space: nowrap;
}
.row.current { background: #e9f2fe; border-top-color: #c4d3e8; }
.story { color: #6a9a23; }
.key {
  margin: 0 19.5px 0 5px;
  letter-spacing: -0.6px;
  font-variant-numeric: tabular-nums;
}
.row .sq { margin-left: auto; }
.loz {
  width: 69px;
  height: 20px;
  margin-left: 23px;
  padding-left: 5px;
  border-radius: 3px;
  background: #dddee1;
  color: #292a2e;
  font-size: 14.5px;
  font-weight: 600;
  letter-spacing: -0.2px;
  display: flex;
  align-items: center;
  gap: 2px;
}
.loz .ic { width: 12px; height: 12px; stroke-width: 2.2; }
.backlog-create {
  height: 52px;
  padding: 0 0 0 26px;
  display: flex;
  align-items: center;
  gap: 8px;
}
.backlog-create .ic { color: #292a2e; }
.vbar-backlog { width: 19px; padding: 6px 0 5px; }
.vbar-backlog .thumb { width: 11px; height: 426px; margin-top: 215px; }
.hbar {
  flex: none;
  height: 18px;
  display: flex;
  align-items: center;
  padding: 0 24px 0 6px;
  background: #fbfbfb;
}
.hthumb { width: 405px; height: 11px; margin-left: 8px; border-radius: 5px; background: #8c8c8c; }

/* detail */
.detail { flex: 1; min-width: 0; display: flex; }
.detail-main {
  flex: 1;
  min-width: 0;
  padding: 25px 30px 0 40px;
  overflow: hidden;
}
.detail-top { display: flex; align-items: flex-start; gap: 10px; height: 61px; }
.trail {
  width: 222px;
  margin-right: -10px;
  font-size: 15px;
}
.trail-line {
  height: 30px;
  padding-left: 5px;
  display: flex;
  align-items: center;
  gap: 6px;
}
.slash { margin-left: 3px; font-size: 17px; }
.epic-bolt { color: #bf63f3; }
.lock { margin: 8px 7px 0 6px; flex: none; }
.watch {
  width: 65px;
  height: 40px;
  margin-left: 5px;
  border: 1px solid #1868db;
  border-radius: 4px;
  background: #e9f2fe;
  color: #1868db;
  display: flex;
  align-items: center;
  justify-content: center;
  gap: 7px;
}
.eye { stroke: none; }
.detail h2 {
  margin-top: 15px;
  font-size: 29.5px;
  line-height: 35px;
  font-weight: 600;
  letter-spacing: -0.2px;
  color: #292a2e;
}
.actions { margin-top: 8px; display: flex; gap: 9px; }
.status-row { margin-top: 15px; padding-left: 5px; display: flex; gap: 10px; }
.status {
  width: 97px;
  height: 40px;
  padding-right: 5px;
  border: 0;
  border-radius: 4px;
  background: #f0f1f2;
  color: #3b3d42;
  display: flex;
  align-items: center;
  justify-content: center;
  gap: 8px;
}
.status .ic-xs { width: 13px; height: 13px; stroke-width: 1.6; }
.detail h3 {
  font-size: 20px;
  line-height: 26px;
  font-weight: 600;
  color: #292a2e;
}
.status-row + h3 { margin-top: 14px; }
.ac { line-height: 25px; margin-top: 4px; color: #292a2e; }
.ac b { font-weight: 600; }
ul { margin-top: 15px; padding-left: 31px; }
li { line-height: 35px; letter-spacing: -0.08px; }
li::marker { color: #292a2e; }
.conf-head {
  margin-top: 29px;
  height: 30px;
  display: flex;
  align-items: center;
}
.info { margin-left: 13px; }
.conf-head .end { margin-right: 14px; }
.conf-plus { color: #292a2e; margin-right: 5px; }
.conf-card {
  width: 528px;
  height: 56px;
  margin-top: 11px;
  padding: 0 9px 0 10px;
  border-radius: 4px;
  background: #fff;
  box-shadow: 0 1px 2px rgba(30, 31, 33, .3), 0 0 1px rgba(30, 31, 33, .2);
  display: flex;
  align-items: center;
  gap: 11px;
}
.conf-card > :not(.try) { margin-top: -1px; }
.try {
  margin-left: auto;
  width: 118px;
  height: 22px;
  margin-top: -1px;
  line-height: 20px;
  border: 1px solid #bf63f3;
  border-radius: 3px;
  text-align: center;
  color: #292a2e;
  font-size: 14.5px;
  font-weight: 600;
  letter-spacing: -0.2px;
}
.details-box {
  width: 529px;
  height: 60px;
  margin-top: 30px;
  padding: 0 18px 0 11px;
  border: 1px solid #dddee1;
  border-radius: 5px 5px 0 0;
  display: flex;
  align-items: center;
  font-size: 20px;
  color: #292a2e;
  font-weight: 500;
}
.details-box .end { margin-right: 30px; color: #505258; }
.vbar-detail { width: 18px; padding: 4px 0 5px; }
.vbar-detail .thumb { width: 10px; height: 248px; margin-top: 10px; }
```
